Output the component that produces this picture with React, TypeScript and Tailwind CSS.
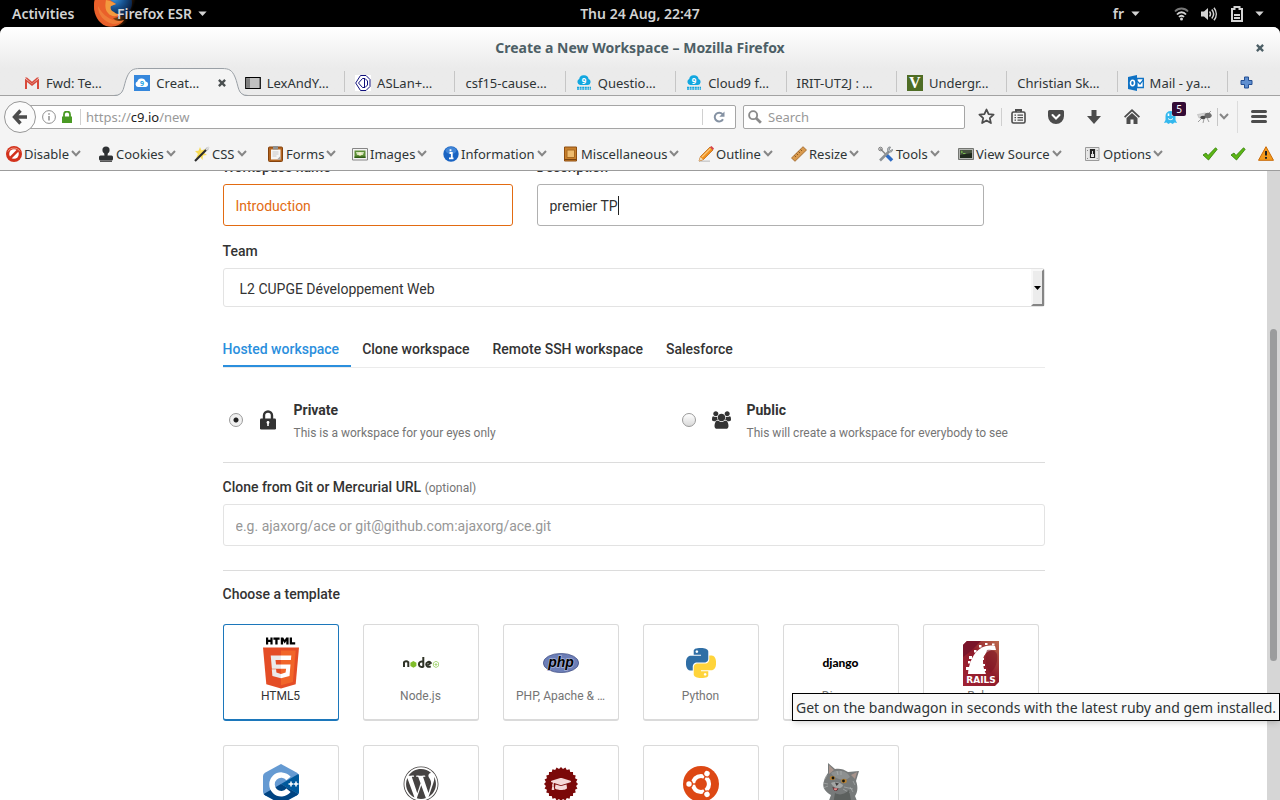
import React, { useState } from "react";
import { FaWordpress, FaGraduationCap } from "react-icons/fa";

/* ---------- small drawing helpers ---------- */

type IconProps = { className?: string };

const Caret = () => (
  <svg viewBox="0 0 10 6" className="h-[5px] w-[9px]" fill="#d3d3d3" aria-hidden="true">
    <path d="M0 .5h10L5 6z" />
  </svg>
);

const Chevron = ({ className }: IconProps) => (
  <svg viewBox="0 0 10 7" className={className} fill="none" stroke="#868686" strokeWidth="2" aria-hidden="true">
    <path d="M1 1l4 4.2L9 1" />
  </svg>
);

const FirefoxLogo = () => (
  <svg viewBox="0 0 42 27" className="h-[27px] w-[42px]" aria-hidden="true">
    <defs>
      <radialGradient id="globe" cx="0.35" cy="0.3" r="0.75">
        <stop offset="0" stopColor="#3f9be0" />
        <stop offset="0.5" stopColor="#175391" />
        <stop offset="1" stopColor="#0a1c3c" />
      </radialGradient>
      <linearGradient id="fox" x1="0" y1="0" x2="1" y2="0.4">
        <stop offset="0" stopColor="#e8501c" />
        <stop offset="0.5" stopColor="#ee7022" />
        <stop offset="0.75" stopColor="#6d3a0c" />
        <stop offset="1" stopColor="#000" />
      </linearGradient>
    </defs>
    <circle cx="21" cy="5" r="21" fill="url(#fox)" />
    <circle cx="24" cy="3" r="14" fill="url(#globe)" />
    <path d="M1 0C-2 10 2 22 12 26c8 2 15-1 18-6-5 2-9 1-11-2 3 0 6-1 7-4-3 1-5 0-7-2-3-1-4-4-3-6l6-2-6-4z" fill="#e9602a" />
    <path d="M12 0l4 1 6 3-5 2c-1 2 0 5 3 6 2 2 4 2 6 2-3 3-9 3-12-1-3-3-3-8-2-13z" fill="#f39a3e" />
    <path d="M4 6c0 9 6 16 15 18 5 0 9-2 11-4-9 3-20-2-26-14z" fill="#f5a04a" opacity="0.45" />
  </svg>
);

const Cloud = () => (
  <svg viewBox="0 0 16 16" className="size-4" aria-hidden="true">
    <path d="M4 10a3.200 3.200 0 0 1-.8-6A4.500 4.500 0 0 1 8 .3a4.500 4.500 0 0 1 4.600 3.600A3.200 3.200 0 0 1 12 10z" fill="#12a7e0" />
    <text x="8" y="8.500" fontSize="8" fontWeight="700" textAnchor="middle" fill="#fff" fontFamily="Noto Sans, sans-serif">9</text>
    <path d="M1 12.500h14M1 14.200h14" stroke="#12a7e0" strokeWidth="1.300" strokeDasharray="2 .6" />
  </svg>
);

/* ---------- browser tabs ---------- */

const favicons: Record<string, React.ReactNode> = {
  gmail: (
    <svg viewBox="0 0 16 16" className="size-4" aria-hidden="true">
      <path d="M1 3h14v11H1z" fill="#eee" />
      <path d="M1 14V3.500L8 9l7-5.500V14h-2V7l-5 4-5-4v7z" fill="#d84a3b" />
      <path d="M1 2.500h2l5 4.200 5-4.200h2L8 9z" fill="#d84a3b" />
    </svg>
  ),
  c9: (
    <svg viewBox="0 0 16 16" className="size-4" aria-hidden="true">
      <path d="M0 0h16v16H0z" fill="#3587dc" />
      <path d="M4 12a2.800 2.800 0 0 1-.6-5.400A4 4 0 0 1 7.600 3.500a4 4 0 0 1 4 3A2.800 2.800 0 0 1 12 12z" fill="#fff" />
      <text x="8" y="10.500" fontSize="7" fontWeight="700" textAnchor="middle" fill="#25a3e4" fontFamily="Noto Sans, sans-serif">9</text>
    </svg>
  ),
  lex: (
    <svg viewBox="0 0 16 16" className="size-4" aria-hidden="true">
      <path d="M.75 2.500h14.500v11H.75z" fill="#c0c0c0" stroke="#000" strokeWidth="1.200" />
      <path d="M1.400 3.200H5v9.700H1.400z" fill="#7f7f7f" />
    </svg>
  ),
  aslan: (
    <svg viewBox="0 0 16 16" className="size-4" fill="none" stroke="#10107c" aria-hidden="true">
      <path d="M0 0h16v16H0z" fill="#fff" stroke="none" />
      <path d="M5.500.5L.7 8l4.800 7.500M7.500 3.500L3.500 8l4 4.500M5.500.5H11l4 4v7l-4 4H5.500M7.500 3.500h2.500l2.500 2.500v4l-2.500 2.500H7.500M9.500 4v8" />
    </svg>
  ),
  cloud: <Cloud />,
  v: (
    <span className="flex size-4 items-center justify-center bg-[#4f6d25] font-['Liberation_Serif',serif] text-base leading-4 font-bold text-white">V</span>
  ),
  outlook: (
    <svg viewBox="0 0 16 16" className="size-4" aria-hidden="true">
      <path d="M9 3.500h6.300v9H9z" fill="#fff" stroke="#0f72c4" strokeWidth="1.300" />
      <path d="M9 6l3 3 4-5" fill="none" stroke="#0f72c4" strokeWidth="1.300" />
      <path d="M0 2l9-2v16l-9-2z" fill="#0f72c4" />
      <ellipse cx="4.500" cy="8" rx="2" ry="2.700" fill="none" stroke="#fff" strokeWidth="1.500" />
    </svg>
  ),
};

const browserTabs: { icon?: string; title: string; active?: boolean; rule?: boolean }[] = [
  { icon: "gmail", title: "Fwd: Te…" },
  { icon: "c9", title: "Creat…", active: true },
  { icon: "lex", title: "LexAndY…", rule: true },
  { icon: "aslan", title: "ASLan+…", rule: true },
  { title: "csf15-cause…", rule: true },
  { icon: "cloud", title: "Questio…", rule: true },
  { icon: "cloud", title: "Cloud9 f…", rule: true },
  { title: "IRIT-UT2J : …", rule: true },
  { icon: "v", title: "Undergr…", rule: true },
  { title: "Christian Sk…", rule: true },
  { icon: "outlook", title: "Mail - ya…", rule: true },
];

const BrowserTabs = () => (
  <div className="flex h-[28px]" role="tablist" aria-label="Browser tabs">
    <div className="w-[14px] border-b border-[#a2a2a2]" />
    <div className="flex min-w-0 flex-1">
      {browserTabs.map((t, i) => (
        <div key={i} className="relative flex min-w-0 flex-1 items-center border-b border-[#a2a2a2]">
          {t.active && (
            <svg viewBox="0 0 134 28" preserveAspectRatio="none" className="absolute top-0 -left-[10px] z-10 h-[28px] w-[134px]" aria-hidden="true">
              <path d="M0 28C11 28 9 18 13 9C16 2 19 .5 26 .5H108C115 .5 118 2 121 9C125 18 123 28 134 28" fill="#f4f4f4" />
              <path d="M0 27.500C11 27.500 9 18 13 9C16 2 19 .5 26 .5H108C115 .5 118 2 121 9C125 18 123 27.500 134 27.500" fill="none" stroke="#9aa0a6" />
            </svg>
          )}
          <button role="tab" aria-selected={!!t.active} className="relative z-20 flex min-w-0 flex-1 items-center gap-[6px] pt-[3px] pl-[10px] whitespace-nowrap">
            {t.icon && <span className="shrink-0">{favicons[t.icon]}</span>}
            <span>{t.title}</span>
          </button>
          {t.active && (
            <button aria-label="Close tab" className="relative z-20 mr-[9px] pt-[2px]">
              <svg viewBox="0 0 9 9" className="size-2" stroke="#4a4f50" strokeWidth="2.600" aria-hidden="true">
                <path d="M1 1l7 7M8 1L1 8" />
              </svg>
            </button>
          )}
          {t.rule && <span className="h-[21px] w-px self-center bg-[#c6c6c6]" />}
        </div>
      ))}
    </div>
    <div className="flex w-[52px] items-center border-b border-[#a2a2a2] pt-[2px] pl-3">
      <button aria-label="New tab">
        <svg viewBox="0 0 13 13" className="size-[13px]" aria-hidden="true">
          <path d="M4.500 1h4v3.500H12v4H8.500V12h-4V8.500H1v-4h3.500z" fill="#5f8fd0" stroke="#244f93" />
        </svg>
      </button>
    </div>
  </div>
);

/* ---------- navigation bar ---------- */

const NavBar = () => (
  <div className="flex h-[41px] items-center pl-[4px]">
    <button aria-label="Back" className="z-10 flex size-8 shrink-0 items-center justify-center rounded-full border border-[#979797] bg-[#fbfbfb]">
      <svg viewBox="0 0 16 16" className="size-4" fill="none" stroke="#4c4c4c" strokeWidth="3.400" aria-hidden="true">
        <path d="M8.500 1.500L2.500 8l6 6.500M3 8h12" />
      </svg>
    </button>
    <div className="-ml-2 flex h-6 min-w-0 flex-1 items-center rounded-r-[2px] border border-[#a5a5a5] bg-white pl-[13px]">
      <svg viewBox="0 0 14 14" className="size-[14px] shrink-0" fill="none" stroke="#8f8f8f" aria-hidden="true">
        <circle cx="7" cy="7" r="6.400" />
        <path d="M7 6v4.500M7 3.200v1.500" strokeWidth="1.500" />
      </svg>
      <svg viewBox="0 0 12 12" className="ml-[5px] h-3 w-3 shrink-0" fill="#4a9a24" aria-hidden="true">
        <path d="M1 5.500h10V12H1z" />
        <path d="M3 6V3.500a3 3 0 0 1 6 0V6" fill="none" stroke="#4a9a24" strokeWidth="1.800" />
      </svg>
      <span className="mr-[5px] ml-[7px] h-4 w-px bg-[#d0d0d0]" />
      <div className="flex-1 text-[#999]">
        https://<span className="text-[#1c1c1c]">c9.io</span>/new
      </div>
      <span className="h-4 w-px bg-[#d0d0d0]" />
      <button aria-label="Reload" className="flex w-8 justify-center">
        <svg viewBox="0 0 12 12" className="size-3" aria-hidden="true">
          <path d="M10 8.200A4.400 4.400 0 1 1 9.500 3.200" fill="none" stroke="#8592a3" strokeWidth="2" />
          <path d="M11.500.5v5.200H6.300z" fill="#8592a3" />
        </svg>
      </button>
    </div>
    <label className="mr-[3px] ml-[7px] flex h-6 w-[222px] items-center gap-[6px] rounded-[2px] border border-[#a5a5a5] bg-white pl-1">
      <svg viewBox="0 0 15 15" className="size-[14px] shrink-0" fill="none" stroke="#8a8a8a" aria-hidden="true">
        <circle cx="5.500" cy="5.500" r="4.300" strokeWidth="2" />
        <path d="M8.800 8.800l5 4.800" strokeWidth="3" />
      </svg>
      <input aria-label="Search" placeholder="Search" className="w-full bg-transparent outline-none placeholder:text-[#999]" />
    </label>
    <button aria-label="Bookmark this page" className="flex h-[18px] w-[34px] items-center justify-center border-r border-[#cfcfcf] pl-1">
      <svg viewBox="0 0 17 17" className="size-[17px]" fill="none" stroke="#4c4c4c" strokeWidth="1.800" strokeLinejoin="round" aria-hidden="true">
        <path d="M8.500 1.500l2.100 4.700 5 .5-3.800 3.400 1.100 5-4.400-2.600-4.400 2.600 1.100-5L1.400 6.700l5-.5z" />
      </svg>
    </button>
    <button aria-label="Bookmarks list" className="flex h-6 w-8 items-center justify-center">
      <svg viewBox="0 0 15 15" className="size-[15px]" fill="none" stroke="#4c4c4c" aria-hidden="true">
        <rect x="1" y="3" width="13" height="11" rx="1.500" strokeWidth="1.600" />
        <path d="M5 3V1h5v2" strokeWidth="2" />
        <path d="M3.500 6.200H5M3.500 8.700H5M3.500 11.200H5M6.500 6.200h5.500M6.500 8.700h5.500M6.500 11.200h5.500" strokeWidth="1.300" />
      </svg>
    </button>
    <button aria-label="Pocket" className="flex h-6 w-[44px] items-center justify-center">
      <svg viewBox="0 0 16 14" className="h-[14px] w-4" aria-hidden="true">
        <path d="M1.500 0h13A1.500 1.500 0 0 1 16 1.500V6A8 8 0 0 1 0 6V1.500A1.500 1.500 0 0 1 1.500 0z" fill="#4c4c4c" />
        <path d="M4.500 5L8 8.500 11.500 5" fill="none" stroke="#fff" strokeWidth="2" strokeLinecap="round" />
      </svg>
    </button>
    <button aria-label="Downloads" className="flex h-6 w-8 items-center justify-center">
      <svg viewBox="0 0 14 14" className="size-[14px]" fill="#4c4c4c" aria-hidden="true">
        <path d="M4.500 0h5v6H14l-7 8-7-8h4.500z" />
      </svg>
    </button>
    <button aria-label="Home" className="flex h-6 w-[44px] items-center justify-center">
      <svg viewBox="0 0 16 15" className="h-[15px] w-4" fill="#4c4c4c" aria-hidden="true">
        <path d="M8 0l8 7.500-1.200 1.300L8 2.500 1.200 8.800 0 7.500z" />
        <path d="M8 4l5.500 5v6h-4v-4.500h-3V15h-4V9z" />
      </svg>
    </button>
    <button aria-label="Ghostery, 5 trackers" className="relative flex h-6 w-8 items-center justify-center">
      <svg viewBox="0 0 13 14" className="h-[14px] w-[13px]" aria-hidden="true">
        <path d="M1.500 6a5 5 0 0 1 10 0v4l1.500 3-2.500-.5L8.700 14 6.500 12.700 4.300 14l-1.800-1.500L0 13l1.500-3z" fill="#33b8ee" />
        <path d="M4.500 3.500v2.500M8.500 3.500v2.500" stroke="#fff" strokeWidth="1.600" />
        <path d="M4 8.500c1.500 1.500 3.500 1.500 5 0" stroke="#fff" fill="none" />
      </svg>
      <span className="absolute -top-[3px] right-0 flex h-[14px] w-[14px] items-center justify-center rounded-[2px] bg-[#330b35] text-[10px] leading-3 text-white">5</span>
    </button>
    <button aria-label="Fly" className="flex h-6 w-[31px] items-center justify-end pr-1">
      <svg viewBox="0 0 16 12" className="h-3 w-4" aria-hidden="true">
        <path d="M.5 3.500L8 2l3 1-4 3-5 1z" fill="#d5d5d5" stroke="#aaa" strokeWidth=".5" />
        <ellipse cx="11" cy="4.500" rx="3.500" ry="2.700" fill="#6d6d6d" />
        <ellipse cx="6" cy="6.500" rx="2.800" ry="1.800" fill="#4a4a4a" />
        <path d="M4 8l-3 3M7 8l-1 4M10 7l2 4M13 4l2 1M12 2l2-2" stroke="#777" strokeWidth=".7" />
      </svg>
    </button>
    <button aria-label="More" className="flex h-[18px] w-[20px] items-center border-l border-[#c6c6c6] pl-[1px]">
      <Chevron className="h-[7px] w-[10px]" />
    </button>
    <button aria-label="Open menu" className="flex h-8 w-[43px] shrink-0 items-center justify-center border-l border-[#dcdcdc]">
      <svg viewBox="0 0 16 13" className="h-[13px] w-4" stroke="#4c4c4c" strokeWidth="3" strokeLinecap="round" aria-hidden="true">
        <path d="M1.500 1.500h13M1.500 6.500h13M1.500 11.500h13" />
      </svg>
    </button>
  </div>
);

/* ---------- developer toolbar ---------- */

const art = "size-4 shrink-0";

const tools: { label: string; width: string; icon: React.ReactNode }[] = [
  {
    label: "Disable", width: "w-[92px]", icon: (
      <svg viewBox="0 0 16 16" className={art}>
        <circle cx="8" cy="8" r="8" fill="#d3321c" />
        <circle cx="8" cy="8" r="4.800" fill="#fff" />
        <path d="M3.500 11l7.500-7.500 1.800 1.800-7.500 7.500z" fill="#d3321c" />
        <path d="M2 5.500C4 1 12 1 14 5.500" stroke="#f0907c" fill="none" />
      </svg>
    ),
  },
  {
    label: "Cookies", width: "w-[96px]", icon: (
      <svg viewBox="0 0 16 16" className={art} fill="#2e3133">
        <circle cx="8" cy="4" r="3.600" />
        <path d="M6 6h4l-.5 4H6.500z" />
        <rect x="1" y="9.500" width="14" height="5" rx="1.500" />
        <path d="M2 14.500h12V16H2z" fill="#555" />
      </svg>
    ),
  },
  {
    label: "CSS", width: "w-[74px]", icon: (
      <svg viewBox="0 0 16 16" className={art}>
        <path d="M6 1l1.500 3.500L11 3 9.500 6.500 13 9l-4 .5L8.500 14 6 10.500 2 12l2-4L1 5l3.500-.3z" fill="#f9dc55" />
        <path d="M1 15L14 2" stroke="#2c2c2c" strokeWidth="2.200" />
        <path d="M12 4l3-3" stroke="#dedede" strokeWidth="2" />
      </svg>
    ),
  },
  {
    label: "Forms", width: "w-[84px]", icon: (
      <svg viewBox="0 0 16 16" className={art}>
        <rect x=".5" y="1" width="14" height="14.500" rx="1" fill="#b3641f" stroke="#84420d" />
        <path d="M3 3.500h9.500v10H3z" fill="#f6f6f4" />
        <path d="M5 0h5v3.500H5z" fill="#8e9090" />
        <path d="M4.500 6h6M4.500 8h6M4.500 10h4" stroke="#c8c8c8" />
        <path d="M9 13.500l3.500-3.500v3.500z" fill="#aaa" />
      </svg>
    ),
  },
  {
    label: "Images", width: "w-[91px]", icon: (
      <svg viewBox="0 0 16 16" className={art}>
        <path d="M.5 2.500h15v11.500H.5z" fill="#f3f3f3" stroke="#868686" />
        <path d="M2.500 4.500h11v7.500h-11z" fill="#5d8f36" />
        <path d="M4 6h8l-1 3H5z" fill="#d3e3bb" />
        <circle cx="8" cy="8" r="1.700" fill="#f4f2cb" />
        <path d="M2.500 10.500h11V12h-11z" fill="#2e5b15" />
      </svg>
    ),
  },
  {
    label: "Information", width: "w-[120px]", icon: (
      <svg viewBox="0 0 16 16" className={art}>
        <circle cx="8" cy="8" r="7.700" fill="#1963c2" />
        <ellipse cx="8" cy="4.500" rx="5.500" ry="3.500" fill="#5c9ce4" opacity=".6" />
        <path d="M6.500 7h2.300v5M6 12.300h4.500M7.500 3.200v2" stroke="#fff" strokeWidth="1.800" fill="none" />
      </svg>
    ),
  },
  {
    label: "Miscellaneous", width: "w-[135px]", icon: (
      <svg viewBox="0 0 16 16" className={art}>
        <path d="M1.500 1h12v14h-12z" fill="#c77f2b" stroke="#8f4e10" />
        <path d="M4 4h7.500v7.500H4z" fill="#eebb6d" stroke="#a86a22" />
        <path d="M1.500 13.500h12" stroke="#7a430e" />
      </svg>
    ),
  },
  {
    label: "Outline", width: "w-[93px]", icon: (
      <svg viewBox="0 0 16 16" className={art}>
        <path d="M1 15.200h11" stroke="#ccc" strokeWidth="1.500" />
        <path d="M1 15l1.500-4.500L12 1l3 3-9.500 9.500z" fill="#f08f1c" stroke="#b9600b" strokeWidth=".7" />
        <path d="M4 11l8.500-8.500" stroke="#fbc878" strokeWidth="1.200" />
        <path d="M12 1l1.500-1 2.500 2.500L15 4z" fill="#d8414a" />
        <path d="M1 15l1.500-4 2.500 2.500z" fill="#f1dcb5" />
      </svg>
    ),
  },
  {
    label: "Resize", width: "w-[87px]", icon: (
      <svg viewBox="0 0 16 16" className={art}>
        <path d="M.5 12L12 .7l3.500 3.300L4 15.300z" fill="#d99a4e" stroke="#9b5f1f" strokeWidth=".8" />
        <path d="M3.500 9.500L5 11M5.500 7.500L7 9M7.500 5.500L9 7M9.500 3.500L11 5" stroke="#7a4812" strokeWidth=".8" />
      </svg>
    ),
  },
  {
    label: "Tools", width: "w-[80px]", icon: (
      <svg viewBox="0 0 16 16" className={art} fill="none">
        <path d="M2 2.500L7.500 8" stroke="#888" strokeWidth="1.500" />
        <path d="M8 8.500l6 6" stroke="#2e6cc5" strokeWidth="3.500" />
        <path d="M2 14.500l9-9" stroke="#8d9296" strokeWidth="2.500" />
        <path d="M14.500 3.500l-2 1-1.200-1.200L12.500 1C10 .5 8.800 3 10 5.500c2.500 1.500 5 0 4.500-2z" fill="#b8bdc0" stroke="#6c7175" strokeWidth=".7" />
        <circle cx="2.500" cy="3" r="1.800" stroke="#777" />
      </svg>
    ),
  },
  {
    label: "View Source", width: "w-[127px]", icon: (
      <svg viewBox="0 0 16 16" className={art}>
        <path d="M.5 2.500h15v11H.5z" fill="#b4b6b2" stroke="#747672" />
        <path d="M2 4h12v8H2z" fill="#1f2a1c" />
        <path d="M2 4h12v3L2 9z" fill="#47533f" />
        <path d="M3 5l1.500 1L3 7M5 7.500h2.500" stroke="#83d650" fill="none" strokeWidth=".8" />
      </svg>
    ),
  },
  {
    label: "Options", width: "w-[90px]", icon: (
      <svg viewBox="0 0 16 16" className={art}>
        <path d="M.5 1.500h13.500v13H.5z" fill="#e6e6e6" stroke="#9a9a9a" />
        <path d="M5.500 3.500h4v8h-4z" fill="#f6f6f6" stroke="#222" strokeWidth="1.200" />
        <path d="M5 3h5v5H5z" fill="#222" />
        <path d="M7 5h1v5H7z" fill="#ddd" />
        <path d="M2.500 4v1M2.500 12v1M12.200 4v1M12.200 12v1" stroke="#888" />
      </svg>
    ),
  },
];

const Check = () => (
  <svg viewBox="0 0 16 14" className="h-[14px] w-4" aria-hidden="true">
    <path d="M1 8l3-2 2 2.500L13.500.8l1.700 1.500L6.500 13z" fill="#5db614" stroke="#2f7d06" strokeWidth=".8" />
  </svg>
);

const DevToolbar = () => (
  <div className="flex h-[33px] items-center pr-[6px] pl-[6px]">
    {tools.map((t) => (
      <button key={t.label} className={`flex shrink-0 items-center gap-[2px] whitespace-nowrap ${t.width}`}>
        {t.icon}
        <span>{t.label}</span>
        <Chevron className="h-[7px] w-[10px] shrink-0" />
      </button>
    ))}
    <div className="ml-auto flex items-center gap-3">
      <Check />
      <Check />
      <svg viewBox="0 0 16 15" className="h-[15px] w-4" aria-hidden="true">
        <path d="M8 .7L15.500 14.300H.5z" fill="#f59a1b" stroke="#c96a08" strokeLinejoin="round" />
        <path d="M8 5v4.500M8 11v1.700" stroke="#1f1f1f" strokeWidth="2" />
      </svg>
    </div>
  </div>
);

/* ---------- template logos ---------- */

const PY =
  "M14.25.18l.9.2.73.26.59.3.45.32.34.34.25.34.16.33.1.3.04.26.02.2-.01.13V8.5l-.05.63-.13.55-.21.46-.26.38-.3.31-.33.25-.35.19-.35.14-.33.1-.3.07-.26.04-.21.02H8.770l-.69.05-.59.14-.5.22-.41.27-.33.32-.27.35-.2.36-.15.37-.1.35-.07.32-.04.27-.02.21v3.060H3.170l-.21-.03-.28-.07-.32-.12-.35-.18-.36-.26-.36-.36-.35-.46-.32-.59-.28-.73-.21-.88-.14-1.050-.05-1.230.06-1.220.16-1.040.24-.87.32-.71.36-.57.4-.44.42-.33.42-.24.4-.16.36-.1.32-.05.24-.01h.16l.06.01h8.160v-.83H6.180l-.01-2.750-.02-.37.05-.34.11-.31.17-.28.25-.26.31-.23.38-.2.44-.18.51-.15.58-.12.64-.1.71-.06.77-.04.84-.02 1.270.05zm-6.300 1.980l-.23.33-.08.41.08.41.23.34.33.22.41.09.41-.09.33-.22.23-.34.08-.41-.08-.41-.23-.33-.33-.22-.41-.09-.41.09z";

const sealPoints = Array.from({ length: 48 }, (_, i) => {
  const r = i % 2 ? 15.2 : 17;
  const a = (i * Math.PI) / 24;
  return `${(18 + r * Math.cos(a)).toFixed(2)},${(18 + r * Math.sin(a)).toFixed(2)}`;
}).join(" ");

const Html5 = () => (
  <svg viewBox="0 0 36 52" className="h-[52px] w-9 shrink-0" aria-hidden="true">
    <path d="M3 .5h2.200v2.300h2.200V.5h2.200v7H7.400V5H5.200v2.500H3zM12.300 2.800h-1.900V.5h6.200v2.300h-2v4.700h-2.300zM17.800.5h2.400l1.500 2.500L23.200.5h2.400v7h-2.300V4l-1.600 2.400L20.100 4v3.500h-2.300zM26.700.5H29v4.700h3.200v2.300h-5.500z" fill="#000" />
    <path d="M0 10.500h36l-3.300 36.800L18 51.500 3.300 47.300z" fill="#e44d26" />
    <path d="M18 13.500h14.700l-2.800 31.400L18 48.300z" fill="#f16529" />
    <path d="M18 18.500H7.700l1.200 13.300H18v-4.400h-5l-.5-4.500H18zM18 36.900l-4.600-1.300-.3-3.300H8.800l.6 6.600 8.600 2.400z" fill="#ebebeb" />
    <path d="M18 18.500h10.300l-.4 4.400H18zM18 27.400h9.500l-1 11.500-8.500 2.400v-4.400l4.600-1.300.5-3.800H18z" fill="#fff" />
  </svg>
);

const NodeLogo = () => (
  <svg viewBox="0 0 36 14" className="h-[14px] w-9" fill="none" stroke="#2f3327" strokeWidth="2" aria-hidden="true">
    <path d="M1 11V6.200c1.500-1.200 3-1.200 4.300 0V11" />
    <path d="M10.400 5l3 1.700v3.400l-3 1.700-3-1.700V6.700z" fill="#80bd2a" stroke="none" />
    <path d="M20.300 1v9.500c-2 1-4.400 0-4.400-2.300s2.400-3.300 4.400-2.200" />
    <path d="M27.700 10.300c-2.500 1.200-4.500 0-4.500-2s2.700-3.500 4.500-1.300l-3 2" />
    <path d="M33 5.300l2.600 1.500v3.200L33 11.500 30.400 10V6.800z" stroke="#a9d67c" strokeWidth="1" />
    <path d="M33 7v3M31.600 8.500h2.800" stroke="#a9d67c" strokeWidth="1" />
  </svg>
);

const PhpLogo = () => (
  <svg viewBox="0 0 36 20" className="h-5 w-9" aria-hidden="true">
    <ellipse cx="18" cy="10" rx="17.700" ry="9.600" fill="#6c7eb7" stroke="#3c4a80" strokeWidth=".7" />
    <text x="18" y="13.500" textAnchor="middle" fontFamily="Liberation Sans, sans-serif" fontSize="14" fontStyle="italic" fontWeight="700" stroke="#a9b4d8" strokeWidth="1.500" paintOrder="stroke" fill="#000">php</text>
  </svg>
);

const PythonLogo = () => (
  <svg viewBox="0 0 24 24" className="size-[30px]" aria-hidden="true">
    <path d={PY} fill="#2f6ea5" />
    <path d={PY} fill="#ffd43b" transform="rotate(180 12 12)" />
  </svg>
);

const DjangoLogo = () => (
  <span className="font-['Lato',sans-serif] text-xs leading-4 font-black text-black">django</span>
);

const RailsLogo = () => (
  <svg viewBox="0 0 36 45" className="h-[45px] w-9" aria-hidden="true">
    <defs>
      <linearGradient id="rails" x1="0" y1="1" x2="1" y2="0">
        <stop offset="0" stopColor="#a02234" />
        <stop offset="0.55" stopColor="#8f1c2b" />
        <stop offset="1" stopColor="#bd6a4d" />
      </linearGradient>
    </defs>
    <path d="M4 0h32v41l-4 4H0V4z" fill="url(#rails)" />
    <path d="M4 0h14L8 10 0 16V4z" fill="#79142a" />
    <path d="M5 33C7 14 17 2 32 5l1 4C24 8 20 14 20 20c0 5 1 9 3 13z" fill="#fff" />
    <path d="M24 9c-3 8-1 16 3 23 6-5 8-12 7-19-2-4-6-5-10-4z" fill="#7d1523" opacity=".6" />
    <g fill="#fff">
      <path d="M6 15h3v3H6zM3 26h3v3H3zM5 20h2.500v2.500H5zM11 9h2.500v2.500H11zM16 4h2.500v2.500H16zM22 2h2.500v2H22zM29 2.500h2.500v2H29zM20 12h2v2h-2zM19 17h2v2h-2zM20 23h2v2h-2zM21 28h2v2h-2z" />
    </g>
    <text x="18" y="41.500" textAnchor="middle" fontFamily="DejaVu Sans, sans-serif" fontSize="9" fontWeight="700" fill="#fff">RAILS</text>
  </svg>
);

const CppLogo = () => (
  <svg viewBox="0 0 36 40" className="h-10 w-9" aria-hidden="true">
    <path d="M18 0l16 8.800q2 1.200 2 3.200v16q0 2-2 3.200L18 40 2 31.200Q0 30 0 28V12Q0 10 2 8.800z" fill="#659ad2" />
    <path d="M35.300 10L18 20l17.300 10q.7-.8.700-2V12q0-1.200-.7-2z" fill="#00599c" />
    <path d="M18 20L.7 30q.4.700 1.300 1.200L18 40l16-8.800q.9-.5 1.300-1.200z" fill="#004482" />
    <path d="M25.500 14.500a9.300 9.300 0 1 0 0 11.800" fill="none" stroke="#fff" strokeWidth="5.500" />
    <path d="M28 17.500v5M25.500 20h5M33 17.500v5M31 20h4.500" stroke="#fff" strokeWidth="1.500" />
  </svg>
);

const SealLogo = () => (
  <span className="grid place-items-center">
    <svg viewBox="0 0 36 36" className="col-start-1 row-start-1 size-9" aria-hidden="true">
      <polygon points={sealPoints} fill="#7b0909" />
    </svg>
    <FaGraduationCap className="col-start-1 row-start-1 size-5 text-[#f4d7d7]" />
  </span>
);

const UbuntuLogo = () => (
  <svg viewBox="0 0 36 36" className="size-9" aria-hidden="true">
    <circle cx="18" cy="18" r="18" fill="#dd4814" />
    <circle cx="18" cy="18" r="8" fill="none" stroke="#fff" strokeWidth="4.200" />
    {[60, 180, 300].map((a) => (
      <g key={a} transform={`rotate(${a} 18 18)`}>
        <path d="M22 18h9" stroke="#dd4814" strokeWidth="1.400" />
        <circle cx="30" cy="18" r="4" fill="#dd4814" />
        <circle cx="30" cy="18" r="2.700" fill="#fff" />
      </g>
    ))}
  </svg>
);

const CatLogo = () => (
  <svg viewBox="0 0 36 42" className="h-[42px] w-9" aria-hidden="true">
    <path d="M5 0l7 6c4-1 9 0 13 3 4 0 7-1 11-1l-3 10c2 5 2 11-1 15l4 10H4l4-11c-7-4-9-9-7-14 1-4 2-5 4-8z" fill="#777a7a" />
    <path d="M6 2l5 5-5 4zM34 9l-6 3 4 4z" fill="#a8948c" />
    <path d="M8 10c6-4 16-3 19 4-3 4-14 4-19-4z" fill="#8d9090" />
    <ellipse cx="9.500" cy="15" rx="2.700" ry="2.100" fill="#b98334" />
    <ellipse cx="21" cy="18" rx="2.800" ry="2.200" fill="#b98334" />
    <circle cx="10" cy="15" r="1.400" fill="#15150f" />
    <circle cx="20.500" cy="18" r="1.400" fill="#15150f" />
    <path d="M8 20c3-2 9-1 12 2 0 4-9 5-12-2z" fill="#a4a6a5" />
    <path d="M12 19.500l4 1-2.500 2.500z" fill="#3e3c3c" />
    <path d="M9.500 24c2 1 5 2 6 1-1 4-5 4-6-1z" fill="#592327" />
    <path d="M10.500 25.500c2-.5 3-.5 4 0-1 2.500-3 2.500-4 0z" fill="#e58b8b" />
    <path d="M5 21l-5-1M5 23l-5 2M21 24l9 2M20 26l7 4M14 8l1 4M18 8v4M30 18l2 4M27 24l3 5M4 12l-2 4" stroke="#bfc2c2" strokeWidth=".5" />
    <path d="M12 30c5 3 10 1 14-3l3 15H10z" fill="#5c605e" />
  </svg>
);

const templates: { name: string; logo: React.ReactNode }[] = [
  { name: "HTML5", logo: <Html5 /> },
  { name: "Node.js", logo: <NodeLogo /> },
  { name: "PHP, Apache & …", logo: <PhpLogo /> },
  { name: "Python", logo: <PythonLogo /> },
  { name: "Django", logo: <DjangoLogo /> },
  { name: "Ruby", logo: <RailsLogo /> },
  { name: "C++", logo: <CppLogo /> },
  { name: "WordPress", logo: <FaWordpress className="size-9 text-[#464342]" /> },
  { name: "Harvard’s CS50", logo: <SealLogo /> },
  { name: "Blank", logo: <UbuntuLogo /> },
  { name: "Custom", logo: <CatLogo /> },
];

/* ---------- workspace form ---------- */

const fieldLabel = "block text-sm leading-5 font-medium text-[#333]";
const field = "mt-[7px] h-[42px] w-full rounded-[3px] border bg-white px-3 pt-[2px] text-sm outline-none";
const workspaceTabs = ["Hosted workspace", "Clone workspace", "Remote SSH workspace", "Salesforce"];

const radioDot =
  "mb-1 size-[14px] shrink-0 appearance-none rounded-full border border-[#9a9a9a] bg-linear-to-b from-white to-[#d9d9d9] checked:bg-[radial-gradient(circle,#222_2px,#f0f0f0_3px)]";

const LockIcon = () => (
  <svg viewBox="0 0 16 20" className="h-5 w-4 shrink-0" aria-hidden="true">
    <path d="M4 9V5.500a4 4 0 0 1 8 0V9" fill="none" stroke="#333" strokeWidth="2.400" />
    <rect x="0" y="8.500" width="16" height="11" rx="1.200" fill="#333" />
    <path d="M8 11.500v4.500" stroke="#fff" strokeWidth="1.600" />
    <circle cx="8" cy="12.500" r="1.400" fill="#fff" />
  </svg>
);

const GroupIcon = () => (
  <svg viewBox="0 0 1920 1792" className="h-[18px] w-[19px] shrink-0" fill="#333" aria-hidden="true">
    <path d="M593 896q-162 5-265 128h-134q-82 0-138-40.500t-56-118.500q0-353 124-353 6 0 43.500 21t97.500 42.500 119 21.500q67 0 133-23-5 37-5 66 0 139 81 256zM1664 1533q0 120-73 189.500t-194 69.500h-874q-121 0-194-69.500t-73-189.500q0-53 3.500-103.500t14-109 26.500-108.500 43-97.500 62-81 85.500-53.500 111.500-20q10 0 43 21.500t73 48 107 48 135 21.500 135-21.500 107-48 73-48 43-21.500q61 0 111.500 20t85.500 53.500 62 81 43 97.500 26.500 108.500 14 109 3.500 103.500zM640 256q0 106-75 181t-181 75-181-75-75-181 75-181 181-75 181 75 75 181zM1344 640q0 159-112.500 271.500t-271.500 112.500-271.500-112.500-112.500-271.500 112.500-271.500 271.500-112.500 271.500 112.500 112.500 271.500zM1920 865q0 78-56 118.500t-138 40.500h-134q-103-123-265-128 81-117 81-256 0-29-5-66 66 23 133 23 59 0 119-21.500t97.500-42.500 43.500-21q124 0 124 353zM1792 256q0 106-75 181t-181 75-181-75-75-181 75-181 181-75 181 75 75 181z" />
  </svg>
);

const WorkspaceForm = () => {
  const [selected, setSelected] = useState("HTML5");
  const [tab, setTab] = useState(workspaceTabs[0]);
  return (
    <form className="mx-auto -mt-[14px] w-full max-w-[822px] font-['Roboto',sans-serif] text-sm text-[#333]">
      <div className="flex gap-6">
        <div className="w-[290px]">
          <label htmlFor="name" className={fieldLabel}>Workspace name</label>
          <input id="name" defaultValue="Introduction" className={`${field} border-[#e26b12] text-[#e26b12]`} />
        </div>
        <div className="relative w-[447px]">
          <label htmlFor="description" className={fieldLabel}>Description</label>
          <input id="description" defaultValue="premier TP" className={`${field} border-[#b0b0b0]`} />
          <span className="absolute top-[39px] left-[81px] h-[19px] w-px bg-[#222]" />
        </div>
      </div>

      <label htmlFor="team" className={`${fieldLabel} mt-[15px]`}>Team</label>
      <div className="mt-[7px] flex h-[39px] rounded-[3px] border border-[#e3e3e3]">
        <select id="team" className="min-w-0 flex-1 appearance-none bg-transparent px-4 pt-[3px] outline-none">
          <option>L2 CUPGE Développement Web</option>
        </select>
        <span className="pointer-events-none flex w-[13px] items-center justify-center border-2 border-t-[#f8f8f8] border-r-[#858585] border-b-[#858585] border-l-[#f8f8f8] bg-[#ececec]">
          <svg viewBox="0 0 7 4" className="h-1 w-[7px]" aria-hidden="true"><path d="M0 0h7L3.500 4z" /></svg>
        </span>
      </div>

      <div role="tablist" className="mt-8 flex border-b border-[#ebebeb]">
        {workspaceTabs.map((t) => (
          <button
            key={t}
            type="button"
            role="tab"
            aria-selected={t === tab}
            onClick={() => setTab(t)}
            className={`border-b-2 pr-3 pb-[6px] pl-[11px] leading-5 font-medium first:pl-0 ${t === tab ? "border-[#2b8fdd] text-[#2b8fdd]" : "border-transparent"}`}
          >
            {t}
          </button>
        ))}
      </div>

      <div className="mt-8 grid grid-cols-[453px_1fr]">
        <label className="flex items-center pl-[6px]">
          <input type="radio" name="visibility" defaultChecked className={radioDot} />
          <span className="mb-1 flex w-[51px] justify-center"><LockIcon /></span>
          <span>
            <span className="block leading-5 font-bold">Private</span>
            <span className="mt-[3px] block text-xs leading-5 text-[#757575]">This is a workspace for your eyes only</span>
          </span>
        </label>
        <label className="flex items-center pl-[6px]">
          <input type="radio" name="visibility" className={radioDot} />
          <span className="mb-1 flex w-[51px] justify-center"><GroupIcon /></span>
          <span>
            <span className="block leading-5 font-bold">Public</span>
            <span className="mt-[3px] block text-xs leading-5 text-[#757575]">This will create a workspace for everybody to see</span>
          </span>
        </label>
      </div>

      <hr className="mt-[19px] border-[#dcdcdc]" />
      <label htmlFor="clone" className={`${fieldLabel} mt-[14px]`}>
        Clone from Git or Mercurial URL <span className="text-xs font-normal text-[#757575]">(optional)</span>
      </label>
      <input id="clone" placeholder="e.g. ajaxorg/ace or git@github.com:ajaxorg/ace.git" className={`${field} border-[#e3e3e3] placeholder:text-[#979797]`} />
      <hr className="mt-6 border-[#dcdcdc]" />

      <h2 className="mt-[13px] leading-5 font-medium">Choose a template</h2>
      <div className="mt-5 -mr-6 flex flex-wrap gap-6">
        {templates.map(({ name, logo }) => (
          <button
            key={name}
            type="button"
            aria-pressed={selected === name}
            onClick={() => setSelected(name)}
            className={`flex h-[97px] w-[116px] flex-col items-center rounded-[3px] border border-b-2 bg-white px-3 pt-3 ${selected === name ? "border-[#1c77bb] text-[#333]" : "border-[#dadada] text-[#757575]"}`}
          >
            <span className="flex h-[52px] w-full items-center justify-center">{logo}</span>
            <span className="-mt-[3px] text-xs leading-5 whitespace-nowrap">{name}</span>
          </button>
        ))}
      </div>
    </form>
  );
};

/* ---------- page ---------- */

export default function App() {
  return (
    <div className="relative flex h-screen flex-col overflow-hidden bg-black font-['Noto_Sans',sans-serif] text-[13px] leading-5 text-[#2e3436]">
      <header className="grid h-[27px] shrink-0 grid-cols-[1fr_auto_1fr] items-center text-sm font-semibold text-[#d3d3d3]">
        <div className="flex items-center">
          <button className="w-[94px] pl-3 text-left">Activities</button>
          <button className="flex items-center">
            <FirefoxLogo />
            <span className="-ml-[19px]">Firefox ESR</span>
            <span className="ml-[6px]"><Caret /></span>
          </button>
        </div>
        <time>Thu 24 Aug, 22:47</time>
        <div className="flex items-center justify-end pr-4">
          <span>fr</span>
          <span className="mr-[34px] ml-[7px]"><Caret /></span>
          <svg viewBox="0 0 15 14" className="mr-3 h-[14px] w-[15px]" fill="none" stroke="#d3d3d3" strokeWidth="1.800" aria-hidden="true">
            <path d="M1 4.500c3.500-4 9.500-4 13 0" stroke="#777" />
            <path d="M3 7.500c2.500-3 6.500-3 9 0M5 10c1.500-1.700 3.500-1.700 5 0" />
            <circle cx="7.500" cy="12" r="1.500" fill="#d3d3d3" stroke="none" />
          </svg>
          <svg viewBox="0 0 16 14" className="mr-[14px] h-[14px] w-4" fill="none" stroke="#d3d3d3" strokeWidth="1.500" aria-hidden="true">
            <path d="M0 4.500h3L7 1v12L3 9.500H0z" fill="#d3d3d3" stroke="none" />
            <path d="M8.500 4.500c1.200 1.500 1.200 3.500 0 5M10.800 2.500c2.200 2.700 2.200 6.300 0 9M13 .7c3 3.800 3 8.800 0 12.600" />
          </svg>
          <svg viewBox="0 0 12 16" className="mr-3 h-4 w-3" fill="none" stroke="#d3d3d3" strokeWidth="2" aria-hidden="true">
            <path d="M1 3h2.500V1h5v2H11v12H1z" />
            <path d="M3 9h6M3 12h6" />
          </svg>
          <Caret />
        </div>
      </header>

      <section className="flex min-h-0 flex-1 flex-col rounded-t-[7px] bg-[#f4f4f4]">
        <div className="shrink-0 rounded-t-[7px] bg-linear-to-b from-white to-[#ebebeb] to-60%">
          <div className="grid h-[41px] grid-cols-[1fr_auto_1fr] items-center pr-4">
            <span />
            <h1 className="pl-4 text-sm font-bold text-[#4d5f66]">Create a New Workspace – Mozilla Firefox</h1>
            <button aria-label="Close window" className="justify-self-end">
              <svg viewBox="0 0 9 9" className="size-2" stroke="#4d5f66" strokeWidth="2.600" aria-hidden="true">
                <path d="M1 1l7 7M8 1L1 8" />
              </svg>
            </button>
          </div>
          <BrowserTabs />
        </div>
        <div className="shrink-0 border-b border-[#9c9c9c]">
          <NavBar />
          <DevToolbar />
        </div>
        <div className="flex min-h-0 flex-1 bg-white">
          <main className="min-w-0 flex-1 overflow-hidden">
            <WorkspaceForm />
          </main>
          <div className="flex w-[13px] shrink-0 justify-center bg-[#d6d6d6] pt-[158px]">
            <div className="h-[332px] w-[7px] rounded-full bg-[#9b9c9d]" />
          </div>
        </div>
      </section>

      <div role="tooltip" className="absolute top-[693px] right-0 border border-black bg-[#f9f9f9] px-[3px] pt-1 pb-[2px] text-sm shadow-md">
        Get on the bandwagon in seconds with the latest ruby and gem installed.
      </div>
    </div>
  );
}
